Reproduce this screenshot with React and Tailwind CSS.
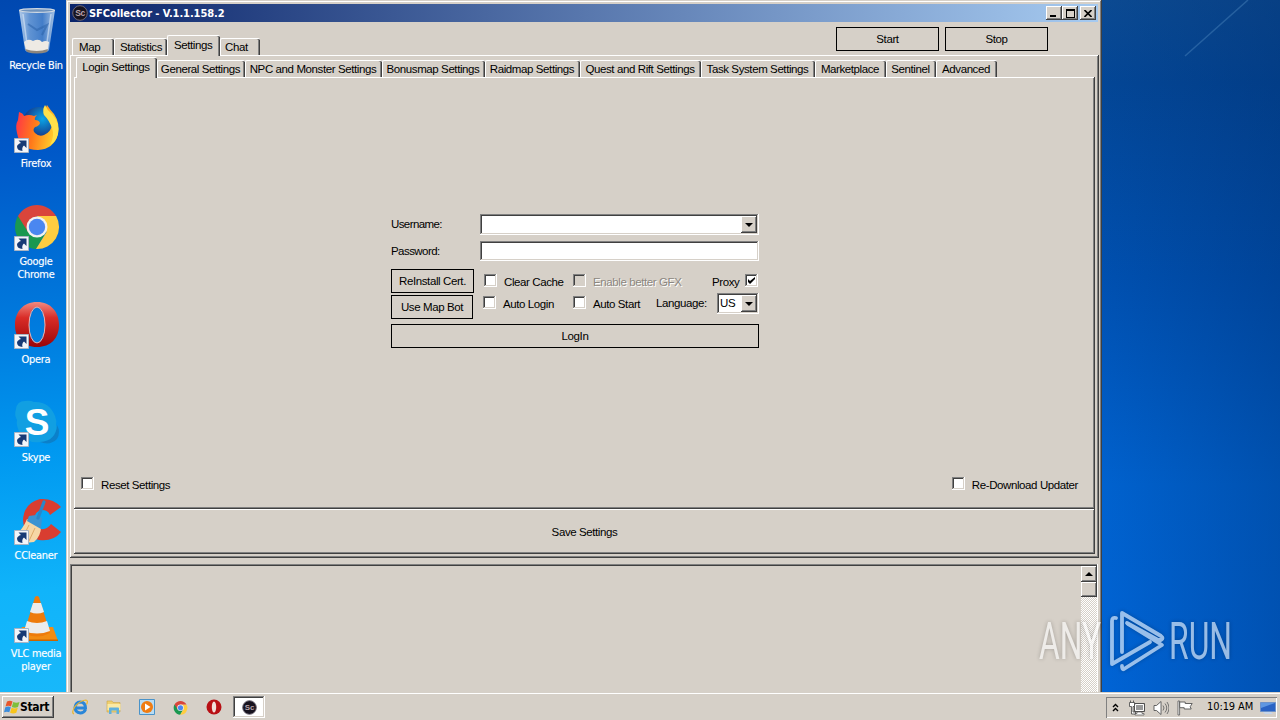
import React, { useState } from "react";

const mainTabs = [
  { label: "Map", box: "w-[42px] pl-[6px]" },
  { label: "Statistics", box: "w-[53px] pl-[5px]" },
  { label: "Settings", box: "w-[53px] pl-[6px]" },
  { label: "Chat", box: "w-[40px] pl-[4px]" },
];

const settingTabs = [
  { label: "Login Settings", box: "w-[81px]" },
  { label: "General Settings", box: "w-[88px]" },
  { label: "NPC and Monster Settings", box: "w-[137px]" },
  { label: "Bonusmap Settings", box: "w-[103px]" },
  { label: "Raidmap Settings", box: "w-[95px]" },
  { label: "Quest and Rift Settings", box: "w-[121px]" },
  { label: "Task System Settings", box: "w-[114px]" },
  { label: "Marketplace", box: "w-[71px]" },
  { label: "Sentinel", box: "w-[50px]" },
  { label: "Advanced", box: "w-[61px]" },
];

const raised = "bg-[#d6d0c8] shadow-[inset_-1px_-1px_#404040,inset_1px_1px_#fff,inset_-2px_-2px_#808080]";
const sunken = "shadow-[inset_-1px_-1px_#fff,inset_1px_1px_#808080,inset_-2px_-2px_#d6d0c8,inset_2px_2px_#404040]";

const RecycleBin = () => (
  <svg viewBox="0 0 48 48" className="size-12">
    <defs>
      <linearGradient id="bin" x1="0" x2="1">
        <stop offset="0" stopColor="#c4d8ee" />
        <stop offset=".3" stopColor="#6b9bd6" />
        <stop offset=".65" stopColor="#4a83cb" />
        <stop offset="1" stopColor="#b9d0ea" />
      </linearGradient>
    </defs>
    <path d="M6 4h36l-6 40q-1 3-12 3t-12-3z" fill="url(#bin)" opacity=".9" />
    <path d="M11 36q4-4 9-1 6-3 9 1 4-2 7 0l-1 8q-11 5-22 0z" fill="#eeeae4" />
    <path d="M12 43q12 4 23 0l-1 3q-10 3-20 0z" fill="#8d867d" />
    <path d="M10 8l4 30M38 8l-4 28" stroke="#dce9f7" strokeWidth="1.500" opacity=".6" />
    <path d="M15 18l9 6 10-5-5 10" stroke="#2f66ab" strokeWidth="2" fill="none" opacity=".6" />
    <ellipse cx="24" cy="4.500" rx="17.500" ry="1.800" fill="#6f93bd" stroke="#cfd8e2" strokeWidth="1.200" />
  </svg>
);

const Firefox = () => (
  <svg viewBox="0 0 48 48" className="size-12">
    <defs>
      <linearGradient id="fox" x1="0" y1=".3" x2="1" y2=".5">
        <stop offset="0" stopColor="#ff3647" />
        <stop offset=".45" stopColor="#ff7a1a" />
        <stop offset="1" stopColor="#ffd92e" />
      </linearGradient>
      <radialGradient id="globe" cx=".6" cy=".35">
        <stop offset="0" stopColor="#0aa5e8" />
        <stop offset="1" stopColor="#15408f" />
      </radialGradient>
    </defs>
    <circle cx="26" cy="20" r="17" fill="url(#globe)" />
    <path d="M6 8q4 1 5 4 5-2 10 0l3-1q-3 3-2 5 4 0 5 3-1 3-5 4-3 3 0 6 4 4 9 2 7-3 8-10 0-6-4-10-4-5-1-10 4 6 7 9 6 9 4 20-4 15-20 16Q7 46 4 29 2 21 5 16z" fill="url(#fox)" />
    <path d="M32 1q2 5 7 9 8 9 6 20-2 8-8 11 5-9 2-17-3-8-8-13-2-5 1-10z" fill="#ffe14a" />
  </svg>
);

const Chrome = ({ className }) => (
  <svg viewBox="0 0 48 48" className={className}>
    <path d="M24 25L5 14A22 22 0 0 0 23 47L33 30z" fill="#1a9850" />
    <path d="M24 14h19.100A22 22 0 0 1 23 47L33.500 30z" fill="#ffcd40" />
    <path d="M5 14A22 22 0 0 1 43 14H24L15 30z" fill="#d9453b" />
    <circle cx="24" cy="25" r="10.500" fill="#f1f1f1" />
    <circle cx="24" cy="25" r="8.200" fill="#4a87f0" />
  </svg>
);

const Opera = ({ className }) => (
  <svg viewBox="0 0 48 48" className={className}>
    <defs>
      <linearGradient id="opera" x1="0" y1="0" x2="0" y2="1">
        <stop offset="0" stopColor="#f08a80" />
        <stop offset=".35" stopColor="#d92c27" />
        <stop offset="1" stopColor="#9b0508" />
      </linearGradient>
    </defs>
    <path fillRule="evenodd" d="M24 2c14 0 22 10 22 23S38 47 24 47 2 38 2 25 10 2 24 2zm0 5c-5 0-8 7-8 18s3 18 8 18 8-7 8-18-3-18-8-18z" fill="url(#opera)" />
    <ellipse cx="24" cy="25" rx="8" ry="18" fill="none" stroke="#f3b0a8" strokeWidth="1" />
  </svg>
);

const Skype = () => (
  <svg viewBox="0 0 48 48" className="size-12 overflow-visible">
    <path d="M3 11Q4 3 12 3q5-1 9 1 15-1 21 14 2 5 1 9 4 7 0 14-7 7-16 3-14 2-21-11-3-6-2-11-3-5-1-11z" fill="#119fe2" />
    <path d="M27 44q16-1 17-17 4 7 0 14-7 7-17 3z" fill="#0b80ca" />
    <text x="24" y="37" textAnchor="middle" fontSize="37" fontWeight="700" fontFamily="Liberation Sans, sans-serif" fill="#fff">S</text>
  </svg>
);

const CCleaner = () => (
  <svg viewBox="0 0 48 48" className="size-12">
    <path d="M48 11Q40 2 27 3 11 7 10 24q1 17 16 20 14 2 22-8l-10-8q-4 6-10 5-7-3-7-10 1-8 8-9 6 0 8 5z" fill="#d93d30" />
    <path d="M14 23l14 8q0 9-7 15-12 2-19-6 8-7 12-17z" fill="#f6d7a6" />
    <path d="M16 29l-6 12M22 32l-6 13" stroke="#dfaa68" strokeWidth="1" />
    <path d="M16 20l7-1 6 3-1 11-14-8z" fill="#3b93d2" />
    <path d="M31 6l-6 16" stroke="#2b86c8" strokeWidth="3.200" strokeLinecap="round" />
  </svg>
);

const Vlc = () => (
  <svg viewBox="0 0 48 48" className="size-12">
    <path d="M9 33h31l5 14H4z" fill="#f28c13" />
    <path d="M4 45.500h41V47H4z" fill="#c96500" />
    <path d="M22 3q2-2 4 0l11 36q-13 7-26 0z" fill="#ee7b0b" />
    <path d="M20 9h8l3 9q-7 3-14 0zM14 27q10 4 20 0l3 10q-13 5-26 0z" fill="#ececec" />
  </svg>
);

const shortcuts = [
  { name: "Recycle Bin", icon: <RecycleBin />, linked: false },
  { name: "Firefox", icon: <Firefox />, linked: true },
  { name: "Google Chrome", icon: <Chrome className="size-12" />, linked: true },
  { name: "Opera", icon: <Opera className="size-12" />, linked: true },
  { name: "Skype", icon: <Skype />, linked: true },
  { name: "CCleaner", icon: <CCleaner />, linked: true },
  { name: "VLC media player", icon: <Vlc />, linked: true },
];

const Shortcut = ({ name, icon, linked }) => (
  <div className="relative flex h-[98px] w-[72px] flex-col items-center pt-[6px]">
    <div className="pl-[2px]">{icon}</div>
    {linked && (
      <svg viewBox="0 0 15 15" className="absolute left-[14px] top-[40px] size-[15px]">
        <path d="M.5.5h14v14H.500z" fill="#f3f5f9" stroke="#a9b4c4" />
        <path d="M4.500 2.500h8v7.500l-2.500-2.500Q7.500 9.500 8.500 13 3 12.500 3 8.500 3.500 6 7 5z" fill="#173a75" />
      </svg>
    )}
    <p className={`mt-[5px] text-center font-['DejaVu_Sans_Condensed','DejaVu_Sans',sans-serif] text-[11px] leading-[13px] tracking-[-0.3px] text-white [text-shadow:0_0_1px_rgba(255,255,255,0.4)] ${name === "Google Chrome" ? "w-[56px]" : "w-[72px]"}`}>
      {name}
    </p>
  </div>
);

const AppBadge = ({ className }) => (
  <svg viewBox="0 0 16 16" className={className}>
    <circle cx="8" cy="8" r="7.300" fill="#17131f" stroke="#6d6673" strokeWidth="1" />
    <text x="8" y="11" textAnchor="middle" fontSize="8.500" fontWeight="700" fontFamily="Liberation Sans, sans-serif" fill="#b9a3ab">Sc</text>
  </svg>
);

const Tab = ({ label, box, active, onClick, centered }) => (
  <button
    onClick={onClick}
    className={`flex shrink-0 items-center whitespace-nowrap rounded-t-[2px] border-l border-t border-white bg-[#d6d0c8] shadow-[inset_-1px_0_#404040,inset_-2px_0_#808080] ${box} ${centered ? "justify-center pr-[2px]" : ""} ${active ? "relative z-10 -mb-px h-[21px] pb-[3px]" : "h-[17px]"}`}
  >
    {label}
  </button>
);

const Check = ({ checked, disabled, onChange }) => (
  <button onClick={onChange} disabled={disabled} className={`flex size-[13px] shrink-0 items-center justify-center ${sunken} ${disabled ? "bg-[#d6d0c8]" : "bg-white"}`}>
    {checked && (
      <svg viewBox="0 0 7 7" className="size-[7px]">
        <path d="M0 2v3l2 2 5-5V0L2 4z" fill="#000" />
      </svg>
    )}
  </button>
);

const DropArrow = () => (
  <span className={`flex w-[16px] items-center justify-center ${raised}`}>
    <svg viewBox="0 0 8 4" className="h-[4px] w-[8px]">
      <path d="M0 0h8L4 4z" fill="#000" />
    </svg>
  </span>
);

const FlatButton = ({ children, box }) => (
  <button className={`flex shrink-0 items-center justify-center border border-black bg-[#d6d0c8] ${box}`}>{children}</button>
);

const LoginForm = () => {
  const [checks, setChecks] = useState({ cache: false, login: false, start: false, proxy: true });
  const toggle = (key) => setChecks((prev) => ({ ...prev, [key]: !prev[key] }));

  return (
    <div className="ml-[316px] mt-[136px] w-[368px]">
      <div className="flex h-[21px] items-center">
        <label className="w-[89px] pb-px tracking-[-0.6px]">Username:</label>
        <div className={`flex h-[21px] w-[279px] justify-end bg-white p-[2px] ${sunken}`}>
          <DropArrow />
        </div>
      </div>
      <div className="mt-[6px] flex h-[20px] items-center">
        <label className="w-[89px] tracking-[-0.55px]">Password:</label>
        <div className={`h-[20px] w-[279px] bg-white ${sunken}`} />
      </div>

      <div className="mt-[8px] flex">
        <div className="flex w-[92px] flex-col gap-[2px]">
          <FlatButton box="h-[24px] w-[83px]">ReInstall Cert.</FlatButton>
          <FlatButton box="h-[24px] w-[82px]">Use Map Bot</FlatButton>
        </div>
        <div className="flex-1">
          <div className="flex h-[24px] items-center pb-[2px]">
            <div className="flex w-[90px] items-center gap-[7px] pl-px">
              <Check checked={checks.cache} onChange={() => toggle("cache")} />
              <span className="relative top-[2px]">Clear Cache</span>
            </div>
            <div className="flex w-[139px] items-center gap-[7px]">
              <Check disabled />
              <span className="relative top-[2px] text-[#8c8780] [text-shadow:1px_1px_#fff]">Enable better GFX</span>
            </div>
            <span className="relative top-[2px] w-[33px]">Proxy</span>
            <Check checked={checks.proxy} onChange={() => toggle("proxy")} />
          </div>
          <div className="flex h-[21px] items-center">
            <div className="flex w-[90px] items-center gap-[7px] pb-[2px]">
              <Check checked={checks.login} onChange={() => toggle("login")} />
              <span className="pt-[2px]">Auto Login</span>
            </div>
            <div className="flex w-[83px] items-center gap-[7px] pb-[2px]">
              <Check checked={checks.start} onChange={() => toggle("start")} />
              <span className="pt-[2px]">Auto Start</span>
            </div>
            <span className="w-[61px] pb-px">Language:</span>
            <div className={`flex h-[21px] w-[42px] shrink-0 justify-between bg-white p-[2px] ${sunken}`}>
              <span className="pl-px leading-[17px]">US</span>
              <DropArrow />
            </div>
          </div>
        </div>
      </div>
      <FlatButton box="mt-[5px] h-[24px] w-[368px]">LogIn</FlatButton>
    </div>
  );
};

const TitleBar = () => (
  <div className="flex h-[18px] w-[1028px] items-center bg-[linear-gradient(90deg,#0a246a,#a6caf0)] pl-[2px] pr-[2px]">
    <AppBadge className="size-[16px]" />
    <h1 className="ml-px flex-1 font-['DejaVu_Sans_Condensed','DejaVu_Sans',sans-serif] text-[11px] font-bold leading-none tracking-[-0.07px] text-white">
      SFCollector - V.1.1.158.2
    </h1>
    <button className={`flex h-[14px] w-[16px] items-end pb-[3px] pl-[4px] ${raised}`}>
      <span className="h-[2px] w-[6px] bg-black" />
    </button>
    <button className={`flex h-[14px] w-[16px] items-center justify-center ${raised}`}>
      <span className="h-[9px] w-[9px] border border-t-2 border-black" />
    </button>
    <button className={`ml-[2px] flex h-[14px] w-[16px] items-center justify-center ${raised}`}>
      <svg viewBox="0 0 8 7" className="h-[7px] w-[8px]">
        <path d="M.500 0l7 7M7.500 0l-7 7" stroke="#000" strokeWidth="1.600" />
      </svg>
    </button>
  </div>
);

const CollectorWindow = () => {
  const [mainTab, setMainTab] = useState("Settings");
  const [tab, setTab] = useState("Login Settings");

  return (
    <section className="absolute left-[66px] top-0 h-[692px] w-[1036px] overflow-hidden bg-[#d6d0c8] pl-[4px] pt-[4px] font-['Liberation_Sans',Arial,sans-serif] text-[11.5px] leading-[20px] tracking-[-0.4px] text-black shadow-[inset_-1px_0_#404040,inset_1px_1px_#d6d0c8,inset_-2px_0_#808080,inset_2px_2px_#fff]">
      <TitleBar />

      <div className="flex h-[33px] justify-between">
        <div className="flex items-end pl-[2px]">
          {mainTabs.map((t) => (
            <Tab key={t.label} {...t} active={mainTab === t.label} onClick={() => setMainTab(t.label)} />
          ))}
        </div>
        <div className="flex gap-[6px] pr-[54px] pt-[5px]">
          <FlatButton box="h-[24px] w-[103px]">Start</FlatButton>
          <FlatButton box="h-[24px] w-[103px]">Stop</FlatButton>
        </div>
      </div>

      {/* Settings page */}
      <div className={`h-[503px] w-[1029px] pl-[4px] pt-px ${raised}`}>
        <div className="flex h-[21px] items-end pl-[2px]">
          {settingTabs.map((t) => (
            <Tab key={t.label} {...t} centered active={tab === t.label} onClick={() => setTab(t.label)} />
          ))}
        </div>
        <div className={`flex h-[432px] w-[1021px] flex-col pb-[16px] pl-px pt-px ${raised}`}>
          <LoginForm />
          <div className="mt-auto flex h-[20px] items-center justify-between pl-[6px] pr-[17px]">
            <div className="flex items-center gap-[7px]">
              <Check />
              <span className="relative top-[2px]">Reset Settings</span>
            </div>
            <div className="flex items-center gap-[7px]">
              <Check />
              <span className="relative top-[2px]">Re-Download Updater</span>
            </div>
          </div>
        </div>
        <button className={`block h-[45px] w-[1021px] ${raised}`}>Save Settings</button>
      </div>

      {/* Log output */}
      <div className="mt-[6px] flex h-[140px] w-[1028px] justify-end border-r border-white pt-[2px] shadow-[inset_1px_1px_#808080,inset_2px_2px_#404040]">
        <div className="w-[16px] bg-[repeating-conic-gradient(#fff_0_25%,#d6d0c8_0_50%)] bg-[length:2px_2px]">
          <div className={`flex h-[16px] items-center justify-center ${raised}`}>
            <svg viewBox="0 0 8 4" className="h-[4px] w-[8px]">
              <path d="M0 4h8L4 0z" fill="#000" />
            </svg>
          </div>
          <div className={`h-[15px] ${raised}`} />
        </div>
      </div>
    </section>
  );
};

const Watermark = () => (
  <svg viewBox="0 0 230 80" className="absolute left-[1035px] top-[606px] h-[80px] w-[230px] overflow-visible opacity-60 drop-shadow-[0_0_2px_rgba(0,0,0,0.4)]">
    <text x="4" y="53" fontSize="52" fontFamily="Roboto, sans-serif" fill="#fff" textLength="62" lengthAdjust="spacingAndGlyphs">ANY</text>
    <text x="134" y="53" fontSize="52" fontFamily="Roboto, sans-serif" fill="#fff" textLength="63" lengthAdjust="spacingAndGlyphs">RUN</text>
    <g fill="none" stroke="#fff" strokeWidth="3.800" strokeLinejoin="round" strokeLinecap="round">
      <path d="M81 12q-4-1-4 3v43l38-22" />
      <path d="M87 46V7l39 23q3 2 0 4l-3 0-31-17" />
      <path d="M93 18l34 21-38 24q-2 1-2-3" />
    </g>
  </svg>
);

const WindowsFlag = () => (
  <svg viewBox="0 0 16 14" className="h-[14px] w-[16px]">
    <path d="M3 1.500q3-1.500 5.500 0L7 6.500Q4.500 5 1.500 6.500z" fill="#e8562a" />
    <path d="M9.300 2q3 1.300 6.200 0L14 7q-3 1.300-6.200 0z" fill="#7fbf3a" />
    <path d="M1.300 7.300q3-1.500 5.500 0L5.300 12.300Q3 11 0 12.300z" fill="#3c8ddc" />
    <path d="M7.600 7.800q3 1.300 6.200 0l-1.500 5q-3 1.300-6.200 0z" fill="#f8c51c" />
  </svg>
);

const Taskbar = () => (
  <footer className="flex h-[28px] w-full shrink-0 items-start bg-[#d6d0c8] pl-[2px] pr-[3px] pt-[4px] shadow-[inset_0_1px_#d6d0c8,inset_0_2px_#fff]">
    <button className={`flex h-[22px] w-[52px] items-center pl-[2px] font-['DejaVu_Sans_Condensed','DejaVu_Sans',sans-serif] text-[12px] font-bold tracking-[-0.3px] text-black ${raised}`}>
      <WindowsFlag />
      Start
    </button>
    <div className="ml-[18px] flex h-[22px] items-center gap-[17.5px]">
      <svg viewBox="0 0 16 16" className="size-[16px]">
        <path d="M13.500 10.500Q12 14 8.300 14 3 13.500 3 8.500 3.500 3.300 8.300 3q5 .2 5.200 6H4" fill="none" stroke="#2a86d8" strokeWidth="3" />
        <path d="M2 15Q-1 14 3 7.500 9 1 14 1q2.500.5.500 4.500" fill="none" stroke="#eab52f" strokeWidth="1.200" />
      </svg>
      <svg viewBox="0 0 16 16" className="size-[16px]">
        <path d="M1 2h5l1 1.500h7V13H1z" fill="#f0d070" stroke="#c9a548" strokeWidth=".6" />
        <path d="M1.500 5h13v6h-13z" fill="#fae9a5" />
        <path d="M3 15V9.500q0-1 1-1h8q1 0 1 1V15h-2.500v-3.500h-5V15z" fill="#5fb0dd" />
      </svg>
      <svg viewBox="0 0 16 16" className="size-[16px]">
        <path d="M.500.500h15v15H.500z" fill="#b9dcf3" stroke="#4a93c9" />
        <circle cx="8" cy="8" r="6" fill="#f07c12" />
        <path d="M6 4.500v7L11.500 8z" fill="#fff" />
      </svg>
      <Chrome className="size-[15px]" />
      <svg viewBox="0 0 16 16" className="ml-px size-[16px]">
        <circle cx="8" cy="8" r="7.500" fill="#b80f14" />
        <ellipse cx="8" cy="8" rx="2.200" ry="5.500" fill="#f1ded9" />
      </svg>
    </div>
    <button className={`ml-[11px] flex h-[22px] w-[32px] items-center justify-center bg-white ${sunken}`}>
      <AppBadge className="size-[15px]" />
    </button>

    {/* Tray */}
    <div className="ml-auto mt-px flex h-[21px] w-[171px] items-center pl-[6px] shadow-[inset_1px_1px_#808080,inset_-1px_-1px_#fff]">
      <svg viewBox="0 0 7 9" className="h-[9px] w-[7px]">
        <path d="M1 4l2.500-2.500L6 4M1 8l2.500-2.500L6 8" fill="none" stroke="#000" strokeWidth="1.400" />
      </svg>
      <svg viewBox="0 0 16 16" className="ml-[10px] size-[16px]">
        <path d="M5.500 3.500h10v8h-10z" fill="#999" stroke="#444" strokeWidth=".9" />
        <path d="M6.500 4.500h8v6h-8z" fill="none" stroke="#fff" />
        <path d="M8 12h5v1.500h2v1.500H6v-1.500h2z" fill="#fff" stroke="#555" strokeWidth=".7" />
        <path d="M.500 2.500h5v4h-1.500v5.500h2.500v2H2.500V6.500h-2zM1.500.500v2M4.500.500v2" fill="#fff" stroke="#444" strokeWidth=".8" />
      </svg>
      <svg viewBox="0 0 16 16" className="ml-[8px] size-[16px]">
        <path d="M1 5.500h2.500L8 1.500v13L3.500 10.500H1z" fill="#fff" stroke="#555" strokeWidth=".9" />
        <path d="M10 5.500q2 2.500 0 5M12 3.500q3.500 4.500 0 9M14 2q4 6 0 12" fill="none" stroke="#666" strokeWidth=".9" />
      </svg>
      <svg viewBox="0 0 16 16" className="ml-[8px] size-[16px]">
        <path d="M1 1h1.600v14H1z" fill="#fff" stroke="#555" strokeWidth=".8" />
        <path d="M2.700 2h5.500v1.500h7l-2 3.200 1 2.300H7.200V7.700H2.700z" fill="#fff" stroke="#555" strokeWidth=".9" />
      </svg>
      <span className="ml-[14px] w-[53px] whitespace-nowrap font-['DejaVu_Sans_Condensed','DejaVu_Sans',sans-serif] text-[11px] tracking-[-0.1px] text-black">10:19 AM</span>
      <svg viewBox="0 0 16 14" className="h-[14px] w-[16px]">
        <path d="M.500 1.500h15v9H.500z" fill="#2a63c4" stroke="#6f93c9" />
        <path d="M1 2h14L1 7z" fill="#5f97e2" />
        <path d="M3 11h8l2 2H5z" fill="#c7d6ea" />
      </svg>
    </div>
  </footer>
);

const App = () => (
  <main className="flex h-[720px] w-[1280px] flex-col overflow-hidden">
    <div className="relative flex flex-1 justify-between overflow-hidden">
      <div className="h-full w-[72px] bg-[linear-gradient(175deg,#0048b0_0%,#0058c8_22%,#0078dc_45%,#0098f0_65%,#10b4fa_85%,#18b8fa_100%)]">
        {shortcuts.map((s) => (
          <Shortcut key={s.name} {...s} />
        ))}
      </div>
      <div className="h-full w-[180px] bg-[linear-gradient(90deg,transparent,rgba(0,40,100,0.3)),linear-gradient(180deg,#0b4a92_0%,#034696_12%,#0050b0_40%,#0062cf_70%,#0064d6_100%)]">
        <svg viewBox="0 0 180 80" className="h-[80px] w-[180px]">
          <path d="M148 0L85 56" stroke="#4c86bd" strokeWidth="1.500" opacity=".45" />
        </svg>
      </div>
      <CollectorWindow />
      <Watermark />
    </div>
    <Taskbar />
  </main>
);

export default App;
